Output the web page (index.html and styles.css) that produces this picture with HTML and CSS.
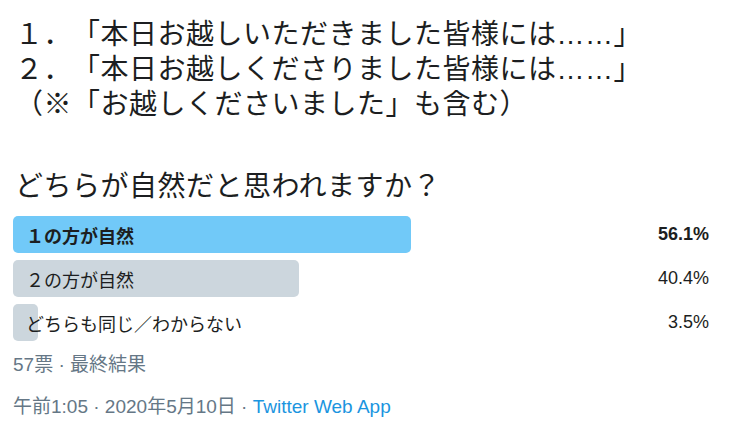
FILE: index.html
```html
<!DOCTYPE html>
<html lang="ja">
<head>
    <meta charset="UTF-8">
    <meta name="viewport" content="width=device-width, initial-scale=1.0">
    <title>投票</title>
    <link rel="stylesheet" href="styles.css">
</head>
<body>

    <div class="tweet">
        <p class="tweet-text">
            １．「本日お越しいただきました皆様には……」<br>
            ２．「本日お越しくださりました皆様には……」<br>
            （※「お越しくださいました」も含む）
        </p>

        <p class="question">どちらが自然だと思われますか？</p>

        <div class="poll">
            <div class="option winner">
                <div class="bar" style="width: 56.1%;"></div>
                <span class="label">１の方が自然</span>
                <span class="pct">56.1%</span>
            </div>
            <div class="option">
                <div class="bar" style="width: 40.4%;"></div>
                <span class="label">２の方が自然</span>
                <span class="pct">40.4%</span>
            </div>
            <div class="option">
                <div class="bar" style="width: 3.5%;"></div>
                <span class="label">どちらも同じ／わからない</span>
                <span class="pct">3.5%</span>
            </div>
        </div>

        <div class="poll-meta">57票 · 最終結果</div>

        <div class="tweet-meta">
            午前1:05 · 2020年5月10日 · <a href="#" class="source">Twitter Web App</a>
        </div>
    </div>

</body>
</html>
```

FILE: styles.css
```css
body {
    font-family: "Liberation Sans", "Noto Sans CJK JP", sans-serif;
    background-color: #fff;
    color: #14171a;
    margin: 0;
    padding: 0;
    text-spacing-trim: space-all;
}

.tweet {
    padding: 17px 18px 0 13px;
}

.tweet-text {
    margin: 0;
    padding-left: 2px;
    font-size: 28px;
    line-height: 35px;
    letter-spacing: 0.5px;
    color: #1c1e21;
}

.question {
    margin: 47px 0 0;
    padding-left: 2px;
    font-size: 28px;
    line-height: 35px;
    letter-spacing: 0.5px;
    color: #1c1e21;
}

.poll {
    margin-top: 12px;
    display: flex;
    flex-direction: column;
    gap: 7px;
}

.option {
    position: relative;
    height: 37px;
    display: flex;
    align-items: center;
    justify-content: space-between;
    font-size: 18px;
}

    .option .bar {
        position: absolute;
        left: 0;
        top: 0;
        bottom: 0;
        background-color: #ccd6dd;
        border-radius: 5px;
    }

    .option.winner .bar {
        background-color: #71c9f8;
    }

    .option.winner .label,
    .option.winner .pct {
        font-weight: bold;
    }

.label {
    position: relative;
    padding-left: 13px;
    color: #1c1e21;
}

.pct {
    position: relative;
    padding-right: 13px;
    color: #1c1e21;
}

.poll-meta {
    margin-top: 12px;
    font-size: 19px;
    line-height: 24px;
    color: #657786;
}

.tweet-meta {
    margin-top: 18px;
    font-size: 19px;
    line-height: 24px;
    color: #657786;
}

    .tweet-meta .source {
        color: #1b95e0;
        text-decoration: none;
    }
```
